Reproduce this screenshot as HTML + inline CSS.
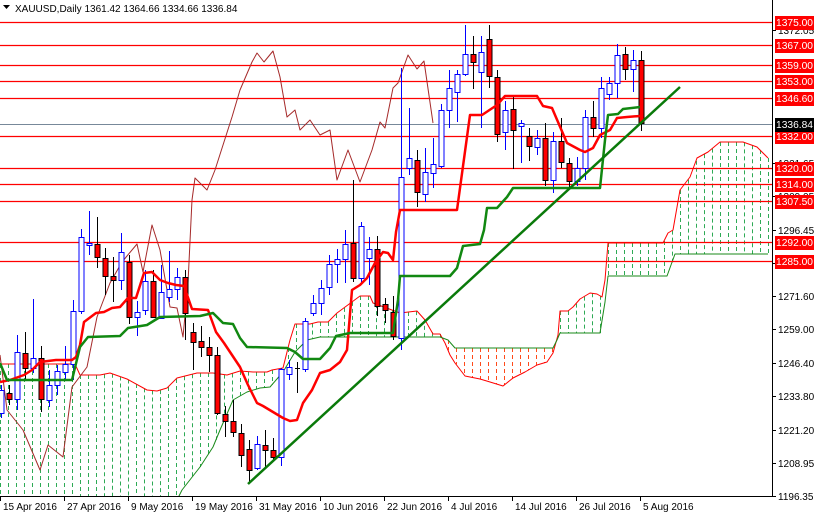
<!DOCTYPE html>
<html><head><meta charset="utf-8">
<style>
html,body{margin:0;padding:0;background:#fff;width:814px;height:514px;overflow:hidden}
svg{display:block}
text{font-family:"Liberation Sans",sans-serif;font-size:10px}
</style></head>
<body>
<svg id="c" width="814" height="514" xmlns="http://www.w3.org/2000/svg">
<defs><clipPath id="cp"><rect x="0" y="0" width="772" height="496"/></clipPath></defs>
<rect width="814" height="514" fill="#fff"/>
<g id="chart" clip-path="url(#cp)"></g>
<line x1="772.5" y1="0" x2="772.5" y2="497" stroke="#000"/>
<line x1="0" y1="496.5" x2="773" y2="496.5" stroke="#000"/>
<g id="axis"></g>
<text x="15" y="12" fill="#000">XAUUSD,Daily  1361.42 1364.66 1334.66 1336.84</text>
<path d="M3 5 L10 5 L6.5 9 Z" fill="#000"/>
</svg>
<script>
var NS="http://www.w3.org/2000/svg";
var ch=document.getElementById('chart'),ax=document.getElementById('axis');
function el(p,t,a){var e=document.createElementNS(NS,t);for(var k in a)e.setAttribute(k,a[k]);p.appendChild(e);return e;}
function pl(p,pts,col,w,extra){var s=pts.map(function(q){return q[0]+','+q[1]}).join(' ');var a={points:s,fill:'none',stroke:col,'stroke-width':w,'stroke-linejoin':'round'};for(var k in extra)a[k]=extra[k];el(p,'polyline',a);}
function interp(pts,x){if(x<=pts[0][0])return pts[0][1];for(var i=1;i<pts.length;i++){if(x<=pts[i][0]){var a=pts[i-1],b=pts[i];return a[1]+(b[1]-a[1])*(x-a[0])/(b[0]-a[0]);}}return pts[pts.length-1][1];}
var A=[[0,364],[75,364],[80,375],[100,375],[110,373],[127,379],[147,390],[157,391],[167,388],[177,378],[197,373],[213,373],[227,375],[240,371],[253,372],[267,372],[272,370],[283,368],[290,340],[295,324],[310,324],[318,322],[328,322],[337,313],[360,296],[370,296],[373,303],[400,313],[417,311],[425,320],[433,334],[440,334],[445,343],[450,355],[455,363],[465,376],[480,379],[490,382],[503,386],[513,378],[525,372],[537,365],[547,362],[553,353],[558,335],[560,311],[568,311],[573,307],[580,299],[590,293],[597,294],[602,297],[605,280],[608,243],[663,243],[668,233],[673,230],[680,190],[690,177],[697,158],[708,152],[720,142],[743,142],[757,147],[768,158]];
var B=[[0,500],[177,500],[182,490],[200,467],[213,447],[220,430],[233,400],[247,392],[260,388],[270,387],[283,372],[295,352],[307,340],[320,337],[440,337],[448,340],[455,348],[553,348],[557,340],[560,333],[600,333],[605,302],[608,276],[667,276],[675,254],[768,254]];
for(var x=0;x<=768;x+=8){var a=interp(A,x),b=interp(B,x);var up=a<=b;el(ch,'line',{x1:x+.5,y1:Math.min(a,b),x2:x+.5,y2:Math.max(a,b),stroke:up?'#2eaa55':'#ff4a1a','stroke-width':1,'stroke-dasharray':'4,3'});}
pl(ch,A,'#ff0000',1);pl(ch,B,'#1a8a1a',1);
[22,45,65,81,98,136,168,184,201,242,261].forEach(function(y){el(ch,'line',{x1:0,y1:y+.5,x2:772,y2:y+.5,stroke:'#ff0000','stroke-width':1.3});});
el(ch,'line',{x1:0,y1:124.5,x2:772,y2:124.5,stroke:'#778899','stroke-width':1});
pl(ch,[[0,355],[7,410],[23,430],[40,470],[48,445],[63,457],[72,387],[87,367],[97,317],[110,283],[122,262],[137,244],[143,272],[152,225],[160,250],[170,307],[177,308],[183,337],[188,283],[192,200],[195,178],[207,190],[215,170],[232,117],[240,90],[252,62],[257,53],[264,62],[273,51],[280,77],[287,117],[295,110],[300,130],[310,120],[320,135],[330,130],[337,180],[348,150],[360,182],[372,150],[380,122],[385,128],[393,88],[398,83],[408,55],[417,69],[424,61],[433,123]],'#a52a2a',1);
var C=[[0,1,390,413,385,418],[8,0,393,399,385,405],[16,1,352,399,335,410],[24,0,353,368,332,380],[32,1,358,368,299,373],[40,0,358,399,346,412],[48,1,385,400,370,407],[56,1,371,385,365,395],[64,1,364,372,346,380],[72,1,311,364,300,380],[80,1,237,311,229,314],[88,1,243,245,211,255],[96,0,244,257,217,268],[104,0,258,276,248,295],[112,0,276,280,257,302],[120,1,252,280,233,290],[128,0,262,317,255,324],[136,1,312,317,301,336],[144,1,281,310,270,315],[152,0,281,317,270,318],[160,1,292,318,265,319],[168,1,289,297,251,302],[176,1,277,289,268,300],[184,0,277,313,270,340],[192,0,332,342,323,370],[200,0,341,347,326,357],[208,0,347,355,337,372],[216,0,355,413,347,415],[224,0,414,421,406,437],[232,0,421,432,400,437],[240,0,433,455,424,467],[248,0,449,470,440,482],[256,1,444,468,436,470],[264,0,445,450,430,468],[272,0,450,457,438,460],[280,1,369,457,368,466],[288,1,367,374,360,380],[296,2,368,370,362,393],[304,1,321,369,318,372],[312,1,303,313,295,316],[320,1,288,303,280,315],[328,1,264,287,255,295],[336,1,259,264,249,283],[344,1,244,259,230,283],[352,0,243,278,180,282],[360,1,226,278,222,284],[368,1,249,258,237,285],[376,0,249,306,236,316],[384,0,304,310,298,323],[392,0,312,336,296,340],[400,1,177,338,68,350],[408,1,158,168,108,175],[416,0,160,192,150,207],[424,1,172,194,148,202],[432,1,164,173,138,188],[440,1,110,166,104,168],[448,1,88,110,70,128],[456,1,74,92,70,122],[464,1,54,74,25,76],[472,0,54,62,36,89],[480,1,52,72,36,128],[488,0,39,76,25,88],[496,0,77,134,70,142],[504,1,110,132,101,150],[512,0,109,130,97,169],[520,1,123,126,120,163],[528,0,136,146,128,161],[536,1,138,147,130,155],[544,0,138,180,123,186],[552,1,141,180,132,193],[560,0,141,162,118,168],[568,0,163,181,158,188],[576,1,168,181,157,186],[584,1,117,168,110,180],[592,0,117,128,101,137],[600,1,88,128,77,138],[608,1,83,94,77,100],[616,1,55,83,44,98],[624,0,54,69,47,80],[632,1,60,69,50,92],[640,0,60,123,51,131]];
C.forEach(function(c){var x=c[0]+1,up=c[1]==1,col=up?'#0000ff':'#000';
el(ch,'line',{x1:x+.5,y1:c[4],x2:x+.5,y2:c[5],stroke:col,'stroke-width':1});
if(c[1]==2){el(ch,'line',{x1:x-2,y1:c[2]+.5,x2:x+3,y2:c[2]+.5,stroke:'#000'});return;}
el(ch,'rect',{x:x-2,y:c[2]+.5,width:5,height:Math.max(1,c[3]-c[2]),fill:up?'#fff':'#ff0000',stroke:col,'stroke-width':1});});
pl(ch,[[0,382],[10,380],[24,375],[32,370],[40,362],[56,360],[72,360],[76,357],[80,345],[84,322],[96,313],[104,312],[112,308],[120,307],[128,298],[136,298],[144,273],[152,272],[160,280],[168,283],[176,285],[184,286],[192,309],[208,310],[216,332],[224,343],[240,367],[248,385],[253,395],[257,403],[263,406],[273,412],[283,418],[290,421],[297,420],[303,403],[312,390],[320,373],[330,370],[340,362],[347,350],[352,290],[360,285],[367,278],[375,263],[383,252],[388,253],[393,260],[396,232],[400,210],[457,210],[470,115],[482,115],[497,105],[505,96],[537,96],[543,106],[552,108],[567,143],[580,150],[585,152],[593,148],[600,135],[610,130],[617,118],[627,117],[640,116]],'#ff0000',2.5);
pl(ch,[[0,363],[7,380],[72,380],[80,347],[88,337],[120,336],[128,328],[147,325],[160,317],[200,316],[213,313],[223,323],[233,324],[240,338],[247,347],[287,348],[295,352],[303,359],[320,359],[330,348],[336,336],[350,333],[393,333],[398,300],[400,276],[450,276],[457,268],[463,246],[480,244],[484,230],[487,208],[497,208],[507,197],[513,188],[600,188],[605,140],[608,115],[618,114],[623,109],[640,107]],'#118811',2.5);
el(ch,'line',{x1:248,y1:484,x2:680,y2:87,stroke:'#0a7a0a','stroke-width':2.5});
[[30,'1372.05'],[163,'1321.65'],[196,'1309.05'],[230,'1296.45'],[263,'1284.25'],[296,'1271.60'],[329,'1259.00'],[363,'1246.40'],[396,'1233.80'],[430,'1221.20'],[463,'1208.95'],[496,'1196.35']].forEach(function(t){el(ax,'line',{x1:772,y1:t[0]+.5,x2:776,y2:t[0]+.5,stroke:'#000'});var e=el(ax,'text',{x:778,y:t[0]+4,fill:'#000'});e.textContent=t[1];});
[[22,'1375.00'],[45,'1367.00'],[65,'1359.00'],[81,'1353.00'],[98,'1346.60'],[136,'1332.00'],[168,'1320.00'],[184,'1314.00'],[201,'1307.50'],[242,'1292.00'],[261,'1285.00'],[124,'1336.84']].forEach(function(t){var blk=t[1]=='1336.84';el(ax,'rect',{x:775,y:t[0]-6,width:39,height:14,fill:blk?'#000':'#ff0000'});var e=el(ax,'text',{x:776,y:t[0]+4,fill:'#fff',textLength:37,lengthAdjust:'spacingAndGlyphs'});e.textContent=t[1];});
[[0,'15 Apr 2016'],[64,'27 Apr 2016'],[128,'9 May 2016'],[192,'19 May 2016'],[256,'31 May 2016'],[320,'10 Jun 2016'],[384,'22 Jun 2016'],[448,'4 Jul 2016'],[512,'14 Jul 2016'],[576,'26 Jul 2016'],[640,'5 Aug 2016']].forEach(function(t){el(ax,'line',{x1:t[0]+.5,y1:496,x2:t[0]+.5,y2:501,stroke:'#000'});var e=el(ax,'text',{x:t[0]+3,y:510,fill:'#000'});e.textContent=t[1];});
</script>
</body></html>
